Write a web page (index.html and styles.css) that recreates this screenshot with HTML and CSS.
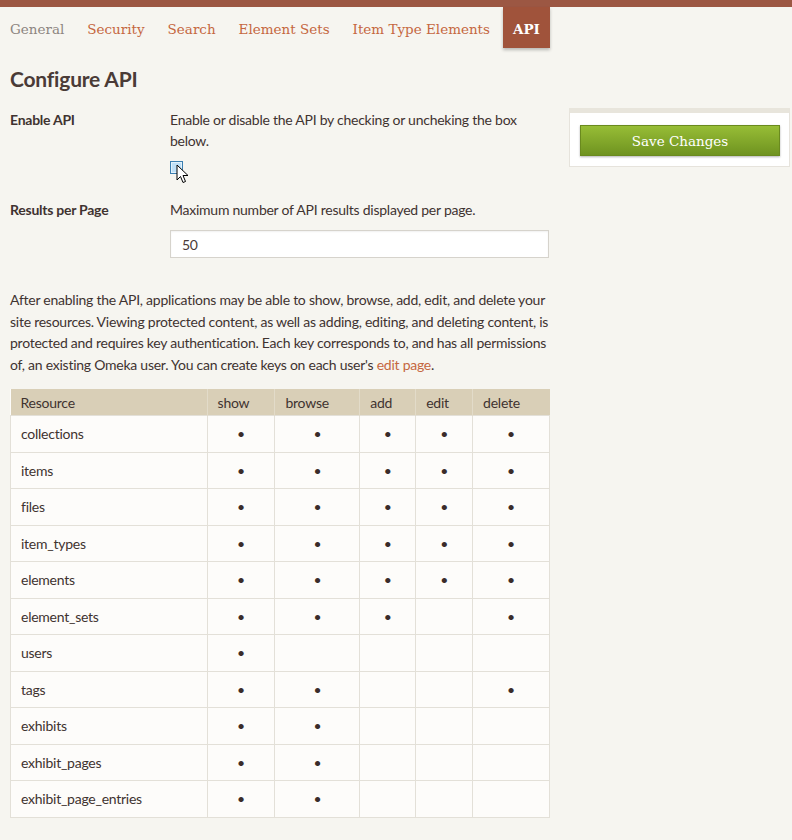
FILE: index.html
```html
<!DOCTYPE html>
<html>
<head>
<meta charset="utf-8">
<link rel="stylesheet" href="styles.css">
</head>
<body>
<div class="topbar"></div>
<nav class="tabs">
  <a class="tab tab-muted">General</a>
  <a class="tab">Security</a>
  <a class="tab">Search</a>
  <a class="tab">Element Sets</a>
  <a class="tab">Item Type Elements</a>
  <a class="tab tab-active">API</a>
</nav>
<div class="layout">
  <main class="main">
    <h1 class="title">Configure API</h1>
    <div class="field">
      <div class="label">Enable API</div>
      <div class="inputs">
        <p class="explanation">Enable or disable the API by checking or uncheking the box below.</p>
        <div class="check-wrap">
          <span class="checkbox"></span>
          <svg class="cursor" width="14" height="20" viewBox="0 0 14 20"><path d="M1 1 L1 16 L4.5 12.5 L7 18.5 L9.5 17.5 L7 11.5 L12 11.5 Z" fill="#fff" stroke="#000" stroke-width="1"/></svg>
        </div>
      </div>
    </div>
    <div class="field">
      <div class="label">Results per Page</div>
      <div class="inputs">
        <p class="explanation">Maximum number of API results displayed per page.</p>
        <div class="textinput">50</div>
      </div>
    </div>
    <p class="intro">After enabling the API, applications may be able to show, browse, add, edit, and delete your site resources. Viewing protected content, as well as adding, editing, and deleting content, is protected and requires key authentication. Each key corresponds to, and has all permissions of, an existing Omeka user. You can create keys on each user's <a class="link">edit page</a>.</p>
    <table class="perms">
      <colgroup>
        <col class="c-res"><col class="c-show"><col class="c-browse"><col class="c-add"><col class="c-edit"><col class="c-delete">
      </colgroup>
      <thead>
        <tr><th>Resource</th><th>show</th><th>browse</th><th>add</th><th>edit</th><th>delete</th></tr>
      </thead>
      <tbody>
        <tr><td>collections</td><td class="d">•</td><td class="d">•</td><td class="d">•</td><td class="d">•</td><td class="d">•</td></tr>
        <tr><td>items</td><td class="d">•</td><td class="d">•</td><td class="d">•</td><td class="d">•</td><td class="d">•</td></tr>
        <tr><td>files</td><td class="d">•</td><td class="d">•</td><td class="d">•</td><td class="d">•</td><td class="d">•</td></tr>
        <tr><td>item_types</td><td class="d">•</td><td class="d">•</td><td class="d">•</td><td class="d">•</td><td class="d">•</td></tr>
        <tr><td>elements</td><td class="d">•</td><td class="d">•</td><td class="d">•</td><td class="d">•</td><td class="d">•</td></tr>
        <tr><td>element_sets</td><td class="d">•</td><td class="d">•</td><td class="d">•</td><td class="d"></td><td class="d">•</td></tr>
        <tr><td>users</td><td class="d">•</td><td class="d"></td><td class="d"></td><td class="d"></td><td class="d"></td></tr>
        <tr><td>tags</td><td class="d">•</td><td class="d">•</td><td class="d"></td><td class="d"></td><td class="d">•</td></tr>
        <tr><td>exhibits</td><td class="d">•</td><td class="d">•</td><td class="d"></td><td class="d"></td><td class="d"></td></tr>
        <tr><td>exhibit_pages</td><td class="d">•</td><td class="d">•</td><td class="d"></td><td class="d"></td><td class="d"></td></tr>
        <tr><td>exhibit_page_entries</td><td class="d">•</td><td class="d">•</td><td class="d"></td><td class="d"></td><td class="d"></td></tr>
      </tbody>
    </table>
  </main>
  <aside class="sidebar">
    <div class="panel">
      <button class="save">Save Changes</button>
    </div>
  </aside>
</div>
</body>
</html>
```

FILE: styles.css
```css
html, body {
  margin: 0;
  padding: 0;
  background: #f6f5f0;
  color: #3f3330;
  font-family: "Lato", "Open Sans", sans-serif;
  font-size: 14px;
  letter-spacing: -0.25px;
}
.topbar {
  height: 7px;
  background: #9c5743;
}
.tabs {
  display: flex;
  gap: 3px;
  height: 41px;
  align-items: stretch;
  letter-spacing: 0;
}
.tab {
  font-family: "DejaVu Serif", serif;
  font-size: 13.5px;
  color: #c5673f;
  padding: 2px 10px 0 10px;
  display: flex;
  align-items: center;
}
.tab-muted {
  color: #8d8580;
}
.tab-active {
  background: #a0533b;
  color: #fff;
  font-weight: bold;
  box-shadow: 0 2px 3px rgba(0,0,0,0.25);
}
.layout {
  display: flex;
  gap: 20px;
}
.main {
  width: 539px;
  padding-left: 10px;
}
.title {
  font-size: 21px;
  font-weight: bold;
  color: #4a3b37;
  margin: 18px 0 0 0;
  line-height: 26px;
  letter-spacing: -0.2px;
}
.field {
  display: flex;
  margin-top: 17px;
}
.field + .field {
  margin-top: 18px;
}
.label {
  width: 160px;
  font-weight: bold;
  line-height: 21px;
}
.inputs {
  flex: 1;
}
.explanation {
  margin: 0;
  line-height: 21px;
}
.check-wrap {
  position: relative;
  height: 20px;
  margin-top: 10px;
}
.checkbox {
  display: block;
  width: 11px;
  height: 11px;
  border: 1px solid #3c7fb1;
  background: #bfe0f7;
  box-shadow: inset 0 0 0 1px #e3f2fc;
}
.cursor {
  position: absolute;
  left: 6px;
  top: 3px;
}
.textinput {
  margin-top: 10px;
  height: 26px;
  border: 1px solid #d6d3cc;
  background: #fff;
  box-shadow: inset 0 1px 2px rgba(0,0,0,0.06);
  padding-left: 11px;
  line-height: 27px;
  color: #4a3b37;
}
.intro {
  margin: 31px 0 0 0;
  line-height: 21.5px;
}
.link {
  color: #c5673f;
}
.perms {
  margin-top: 14px;
  width: 540px;
  border-collapse: collapse;
  background: #fdfcfa;
}
.c-res { width: 197px; }
.c-show { width: 68px; }
.c-browse { width: 85px; }
.c-add { width: 56px; }
.c-edit { width: 57px; }
.c-delete { width: 77px; }
.perms th {
  background: #d9cfb7;
  text-align: left;
  font-weight: normal;
  height: 26px;
  padding: 0 10px;
  border-left: 1px solid #e2dbc9;
  color: #3f3330;
}
.perms th:first-child { border-left: none; }
.perms td {
  height: 35.5px;
  padding: 0 10px;
  border: 1px solid #e3e0d8;
}
.perms td.d {
  text-align: center;
  padding: 0;
  color: #3a2c2a;
}
.sidebar {
  padding-top: 60px;
}
.panel {
  width: 221px;
  box-sizing: border-box;
  background: #fff;
  border: 1px solid #e6e3dc;
  border-top: 5px solid #e8e5dc;
  padding: 12px 10px 10px 10px;
}
.save {
  display: block;
  width: 200px;
  height: 31px;
  border: 1px solid #6a8a1e;
  background: linear-gradient(#97bd36, #6f9320);
  color: #fff;
  font-family: "DejaVu Serif", serif;
  font-size: 13.5px;
  letter-spacing: 0;
  box-shadow: 0 1px 2px rgba(0,0,0,0.3);
  padding: 0;
}
```
